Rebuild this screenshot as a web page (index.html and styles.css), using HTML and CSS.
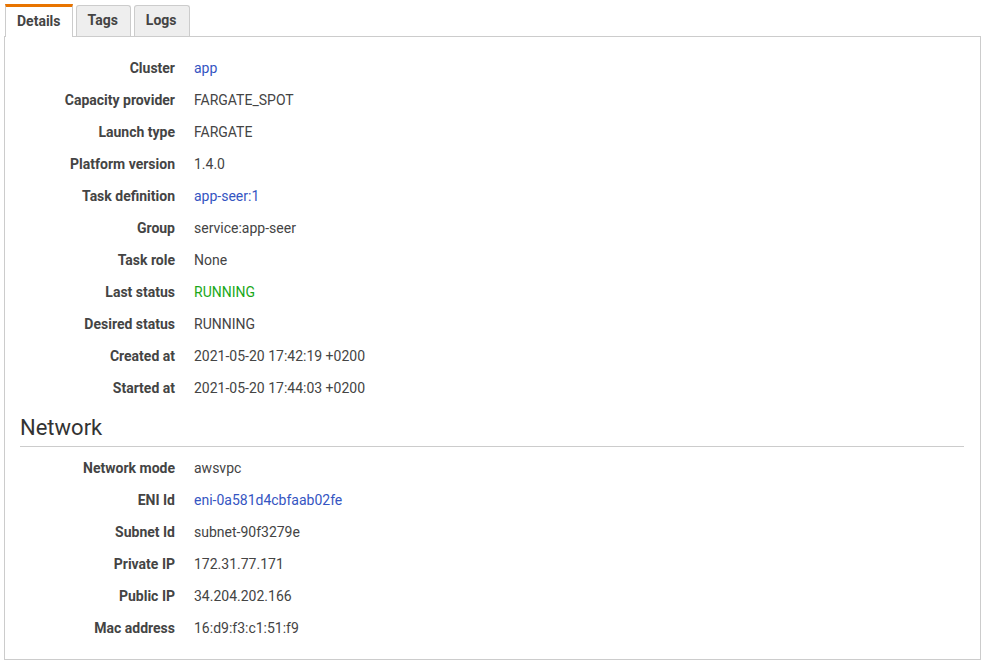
FILE: index.html
```html
<!DOCTYPE html>
<html lang="en">
<head>
    <meta charset="UTF-8">
    <meta name="viewport" content="width=device-width, initial-scale=1.0">
    <title>Task details</title>
    <link rel="stylesheet" href="styles.css">
</head>
<body>
    <div class="tabs">
        <div class="tab active">Details</div>
        <div class="tab">Tags</div>
        <div class="tab">Logs</div>
    </div>
    <div class="panel">
        <table class="props">
            <tr><th>Cluster</th><td><a href="#">app</a></td></tr>
            <tr><th>Capacity provider</th><td>FARGATE_SPOT</td></tr>
            <tr><th>Launch type</th><td>FARGATE</td></tr>
            <tr><th>Platform version</th><td>1.4.0</td></tr>
            <tr><th>Task definition</th><td><a href="#">app-seer:1</a></td></tr>
            <tr><th>Group</th><td>service:app-seer</td></tr>
            <tr><th>Task role</th><td>None</td></tr>
            <tr><th>Last status</th><td class="ok">RUNNING</td></tr>
            <tr><th>Desired status</th><td>RUNNING</td></tr>
            <tr><th>Created at</th><td>2021-05-20 17:42:19 +0200</td></tr>
            <tr><th>Started at</th><td>2021-05-20 17:44:03 +0200</td></tr>
        </table>

        <h2>Network</h2>
        <table class="props">
            <tr><th>Network mode</th><td>awsvpc</td></tr>
            <tr><th>ENI Id</th><td><a href="#">eni-0a581d4cbfaab02fe</a></td></tr>
            <tr><th>Subnet Id</th><td>subnet-90f3279e</td></tr>
            <tr><th>Private IP</th><td>172.31.77.171</td></tr>
            <tr><th>Public IP</th><td>34.204.202.166</td></tr>
            <tr><th>Mac address</th><td>16:d9:f3:c1:51:f9</td></tr>
        </table>
    </div>
</body>
</html>
```

FILE: styles.css
```css
body {
    font-family: Roboto, "Liberation Sans", sans-serif;
    font-size: 14px;
    color: #444;
    margin: 4px 4px 0 4px;
    background: #fff;
}
.tabs {
    display: flex;
    gap: 3px;
    height: 32px;
    align-items: flex-end;
    margin-left: 1px;
}
.tab {
    box-sizing: border-box;
    height: 31px;
    padding: 0 12px 0 11px;
    line-height: 29px;
    font-weight: bold;
    color: #444;
    background: #eee;
    border: 1px solid #ccc;
    border-bottom: none;
    border-radius: 3px 3px 0 0;
}
.tab.active {
    height: 33px;
    margin-bottom: -1px;
    background: #fff;
    border-top: 3px solid #e87400;
    border-radius: 0;
    padding: 0 11px;
    line-height: 29px;
    position: relative;
}
.panel {
    width: 977px;
    box-sizing: border-box;
    border: 1px solid #ccc;
    padding: 15px 16px 15px 16px;
}
.props {
    border-collapse: collapse;
}
.props th {
    width: 154px;
    text-align: right;
    font-weight: bold;
    color: #444;
    height: 32px;
    padding: 0;
    vertical-align: middle;
}
.props td {
    padding: 0 0 0 19px;
    height: 32px;
    vertical-align: middle;
}
.props a {
    color: #3555c2;
    text-decoration: none;
}
.ok {
    color: #1aa81a;
}
h2 {
    font-size: 22px;
    font-weight: normal;
    color: #333;
    margin: 9px 0 5px -1px;
    padding-bottom: 3px;
    border-bottom: 1px solid #ccc;
    line-height: 30px;
}
```
